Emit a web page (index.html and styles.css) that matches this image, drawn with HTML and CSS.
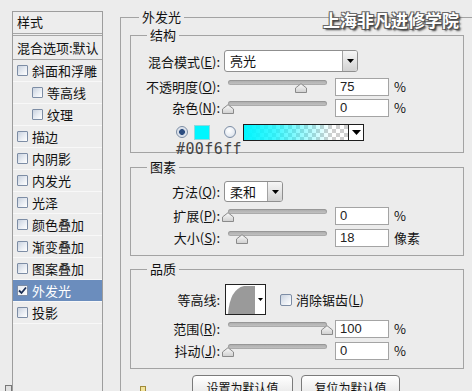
FILE: index.html
```html
<!DOCTYPE html>
<html lang="zh-CN">
<head>
<meta charset="utf-8">
<title>图层样式 - 外发光</title>
<link rel="stylesheet" href="styles.css">
</head>
<body>
<div class="dialog">
  <aside class="styles-panel">
    <div class="panel-head">样式</div>
    <div class="panel-blend">混合选项:默认</div>
    <ul class="style-list">
      <li class="style-item"><span class="cb"></span>斜面和浮雕</li>
      <li class="style-item sub"><span class="cb"></span>等高线</li>
      <li class="style-item sub"><span class="cb"></span>纹理</li>
      <li class="style-item"><span class="cb"></span>描边</li>
      <li class="style-item"><span class="cb"></span>内阴影</li>
      <li class="style-item"><span class="cb"></span>内发光</li>
      <li class="style-item"><span class="cb"></span>光泽</li>
      <li class="style-item"><span class="cb"></span>颜色叠加</li>
      <li class="style-item"><span class="cb"></span>渐变叠加</li>
      <li class="style-item"><span class="cb"></span>图案叠加</li>
      <li class="style-item selected"><span class="cb checked"><svg viewBox="0 0 11 11" width="11" height="11"><path d="M2 5.5 L4.5 8 L9 2.5" fill="none" stroke="#1b2f55" stroke-width="1.8"/></svg></span>外发光</li>
      <li class="style-item"><span class="cb"></span>投影</li>
    </ul>
  </aside>

  <main class="settings">
    <fieldset class="group outer">
      <legend>外发光</legend>
      <div class="outer-body">

        <fieldset class="group inner structure">
          <legend>结构</legend>
          <div class="row r-blend">
            <span class="lbl">混合模式(<u>E</u>):</span>
            <div class="select sel-wide"><span class="sel-text">亮光</span><span class="sel-btn"><svg width="7" height="4" viewBox="0 0 7 4"><path d="M0 0H7L3.5 4Z" fill="#000"/></svg></span></div>
          </div>
          <div class="row r-opacity">
            <span class="lbl">不透明度(<u>O</u>):</span>
            <div class="slider"><span class="track"></span><svg class="thumb" style="left:71px" width="12" height="10" viewBox="0 0 12 10"><defs><linearGradient id="tg1" x1="0" y1="0" x2="0" y2="1"><stop offset="0" stop-color="#fbfbfb"/><stop offset="1" stop-color="#cfcfcf"/></linearGradient></defs><path d="M0.5 9.5V5L6 0.7L11.5 5V9.5Z" fill="url(#tg1)" stroke="#8a8a8a"/></svg></div>
            <span class="num">75</span><span class="unit">%</span>
          </div>
          <div class="row r-noise">
            <span class="lbl">杂色(<u>N</u>):</span>
            <div class="slider"><span class="track"></span><svg class="thumb" style="left:-2px" width="12" height="10" viewBox="0 0 12 10"><path d="M0.5 9.5V5L6 0.7L11.5 5V9.5Z" fill="url(#tg1)" stroke="#8a8a8a"/></svg></div>
            <span class="num">0</span><span class="unit">%</span>
          </div>
          <div class="row r-color">
            <span class="radio on"></span>
            <span class="swatch"></span>
            <span class="radio off"></span>
            <span class="gradient"><span class="grad-fill"></span><span class="grad-btn"><svg width="9" height="5" viewBox="0 0 9 5"><path d="M0 0H9L4.5 5Z" fill="#000"/></svg></span></span>
          </div>
        </fieldset>

        <fieldset class="group inner elements">
          <legend>图素</legend>
          <div class="row r-method">
            <span class="lbl">方法(<u>Q</u>):</span>
            <div class="select sel-short"><span class="sel-text">柔和</span><span class="sel-btn"><svg width="7" height="4" viewBox="0 0 7 4"><path d="M0 0H7L3.5 4Z" fill="#000"/></svg></span></div>
          </div>
          <div class="row r-spread">
            <span class="lbl">扩展(<u>P</u>):</span>
            <div class="slider"><span class="track"></span><svg class="thumb" style="left:-2px" width="12" height="10" viewBox="0 0 12 10"><path d="M0.5 9.5V5L6 0.7L11.5 5V9.5Z" fill="url(#tg1)" stroke="#8a8a8a"/></svg></div>
            <span class="num">0</span><span class="unit">%</span>
          </div>
          <div class="row r-size">
            <span class="lbl">大小(<u>S</u>):</span>
            <div class="slider"><span class="track"></span><svg class="thumb" style="left:12px" width="12" height="10" viewBox="0 0 12 10"><path d="M0.5 9.5V5L6 0.7L11.5 5V9.5Z" fill="url(#tg1)" stroke="#8a8a8a"/></svg></div>
            <span class="num">18</span><span class="unit">像素</span>
          </div>
        </fieldset>

        <fieldset class="group inner quality">
          <legend>品质</legend>
          <div class="row r-contour">
            <span class="lbl">等高线:</span>
            <div class="contour">
              <svg class="contour-curve" width="29" height="29" viewBox="0 0 29 29"><path d="M2 29 Q4 4 18 1 L29 1 L29 29 Z" fill="#9a9a9a"/></svg>
              <span class="contour-btn"><svg width="5" height="3" viewBox="0 0 5 3"><path d="M0 0H5L2.5 3Z" fill="#000"/></svg></span>
            </div>
            <span class="cb aa"></span><span class="aa-text">消除锯齿(<u>L</u>)</span>
          </div>
          <div class="row r-range">
            <span class="lbl">范围(<u>R</u>):</span>
            <div class="slider"><span class="track"></span><svg class="thumb" style="left:97px" width="12" height="10" viewBox="0 0 12 10"><path d="M0.5 9.5V5L6 0.7L11.5 5V9.5Z" fill="url(#tg1)" stroke="#8a8a8a"/></svg></div>
            <span class="num">100</span><span class="unit">%</span>
          </div>
          <div class="row r-jitter">
            <span class="lbl">抖动(<u>J</u>):</span>
            <div class="slider"><span class="track"></span><svg class="thumb" style="left:-2px" width="12" height="10" viewBox="0 0 12 10"><path d="M0.5 9.5V5L6 0.7L11.5 5V9.5Z" fill="url(#tg1)" stroke="#8a8a8a"/></svg></div>
            <span class="num">0</span><span class="unit">%</span>
          </div>
        </fieldset>

        <div class="buttons">
          <span class="mini-icon"></span>
          <button class="btn btn-default" type="button">设置为默认值</button>
          <button class="btn btn-reset" type="button">复位为默认值</button>
        </div>
      </div>
    </fieldset>
  </main>
</div>

<div class="hex-note">#00f6ff</div>
<div class="watermark">上海非凡进修学院</div>
<span class="corner-icon"></span>
</body>
</html>
```

FILE: styles.css
```css
* { box-sizing: border-box; }

html, body {
  margin: 0;
  padding: 0;
}

body {
  width: 472px;
  height: 391px;
  overflow: hidden;
  position: relative;
  background: #ececec;
  font-family: "Noto Sans CJK SC", "Liberation Sans", sans-serif;
  font-size: 13px;
  color: #111;
}

u { text-decoration: underline; text-underline-offset: 1px; }

.dialog {
  display: flex;
  align-items: flex-start;
  height: 391px;
}

/* ---------- left styles panel ---------- */
.styles-panel {
  flex: none;
  width: 91px;
  height: 400px;
  margin: 11px 0 0 12px;
  border: 1px solid #9d9d9d;
  border-bottom: none;
  background: #ededed;
}

.panel-head {
  height: 24px;
  padding-left: 4px;
  line-height: 20px;
  border-bottom: 3px double #a6a6a6;
}

.panel-blend {
  height: 24px;
  padding-left: 4px;
  line-height: 23px;
  border-bottom: 1px solid #a6a6a6;
  white-space: nowrap;
}

.style-list {
  list-style: none;
  margin: 0;
  padding: 0;
}

.style-item {
  height: 22px;
  display: flex;
  align-items: center;
  padding-left: 4px;
  border-bottom: 1px solid #f8f8f8;
  white-space: nowrap;
}

.style-item.sub { padding-left: 19px; }

.style-item.selected {
  background: #6b8dbd;
  color: #fff;
}

.cb {
  flex: none;
  width: 11px;
  height: 11px;
  margin-right: 4px;
  border: 1px solid #7d8da5;
  border-radius: 1px;
  background: linear-gradient(135deg, #c9d2df 0%, #e9edf3 55%, #ffffff 100%);
  position: relative;
}

.cb.checked {
  background: linear-gradient(135deg, #e4e9f0, #ffffff);
}

.cb.checked svg {
  position: absolute;
  left: -1px;
  top: -1px;
}

/* ---------- right settings ---------- */
.settings {
  flex: none;
  margin-left: 17px;
}

.group {
  margin: 0;
  padding: 0;
  min-width: 0;
  border: 1px solid #a3a3a3;
}

.group > legend {
  padding: 0 3px;
  line-height: 14px;
  font-size: 13px;
  color: #111;
}

.outer {
  width: 360px;
  height: 420px;
  margin-top: 10px;
  border-right: none;
  border-bottom: none;
}

.outer > legend { margin-left: 18px; }

.outer-body {
  padding: 4px 0 0 9px;
}

.inner {
  width: 334px;
}

.inner > legend { margin-left: 16px; }

.structure { padding-bottom: 9px; }
.elements { margin-top: 7px; padding-bottom: 7px; }
.quality { margin-top: 6px; padding-bottom: 7px; }

.row {
  display: flex;
  align-items: center;
  height: 21px;
  white-space: nowrap;
}

.lbl {
  flex: none;
  width: 89px;
  text-align: right;
}

.r-blend { height: 22px; margin-top: 8px; }
.r-opacity { margin-top: 4px; }
.r-color { height: 22px; margin-top: 3px; }
.r-method { margin-top: 7px; }
.r-spread { margin-top: 3px; }
.r-size { margin-top: 1px; }
.r-contour { height: 31px; margin-top: 8px; }
.r-range { margin-top: 3px; }
.r-jitter { margin-top: 1px; }

/* select */
.select {
  flex: none;
  display: flex;
  margin-left: 4px;
  height: 22px;
  border: 1px solid #8f8f8f;
  border-radius: 3px;
  background: #fff;
  overflow: hidden;
}

.sel-wide { width: 134px; }
.sel-short { width: 59px; height: 21px; }

.sel-text {
  flex: 1;
  padding-left: 5px;
  line-height: 19px;
}

.sel-btn {
  flex: none;
  width: 15px;
  display: flex;
  align-items: center;
  justify-content: center;
  border-left: 1px solid #a3a3a3;
  background: linear-gradient(#f6f6f6, #d2d2d2);
}

/* slider */
.slider {
  flex: none;
  position: relative;
  width: 107px;
  height: 21px;
  margin-left: 4px;
}

.track {
  position: absolute;
  left: 4px;
  right: 4px;
  top: 4px;
  height: 5px;
  border-radius: 3px;
  background: linear-gradient(#a9a9a9, #c6c6c6);
  box-shadow: inset 0 0 0 1px rgba(0, 0, 0, 0.12);
}

.thumb {
  position: absolute;
  top: 7px;
}

/* numeric input */
.num {
  flex: none;
  width: 54px;
  height: 18px;
  margin-left: 4px;
  padding-left: 4px;
  border: 1px solid #a4a4a4;
  background: #fff;
  font-family: "Liberation Sans", sans-serif;
  font-size: 13px;
  line-height: 16px;
  color: #222;
}

.unit {
  margin-left: 5px;
}

/* color row */
.radio {
  flex: none;
  width: 12px;
  height: 12px;
  border-radius: 50%;
  border: 1px solid #7b8ca4;
}

.radio.on {
  margin-left: 45px;
  background: radial-gradient(circle, #2c4d80 0 2.6px, #d4dbe6 3.2px, #f4f6fa 100%);
}

.radio.off {
  margin-left: 14px;
  background: radial-gradient(circle at 40% 35%, #ffffff 0, #e6ebf2 60%, #c8d0dc 100%);
}

.swatch {
  flex: none;
  width: 16px;
  height: 15px;
  margin-left: 6px;
  background: #00f6ff;
  border: 1px solid #8fd8dc;
}

.gradient {
  flex: none;
  display: flex;
  width: 121px;
  height: 17px;
  margin-left: 7px;
  border: 1px solid #1e1e1e;
}

.grad-fill {
  flex: 1;
  background:
    linear-gradient(to right, #00f6ff 0%, rgba(0, 246, 255, 0.75) 30%, rgba(0, 246, 255, 0) 85%),
    conic-gradient(#cfcfcf 25%, #ffffff 0 50%, #cfcfcf 0 75%, #ffffff 0) 0 0 / 8px 8px;
}

.grad-btn {
  flex: none;
  width: 15px;
  display: flex;
  align-items: center;
  justify-content: center;
  border-left: 1px solid #1e1e1e;
  background: #fff;
}

/* contour */
.contour {
  flex: none;
  display: flex;
  width: 41px;
  height: 31px;
  margin-left: 5px;
  border: 1px solid #222;
  background: #fff;
}

.contour-curve {
  flex: none;
}

.contour-btn {
  flex: 1;
  display: flex;
  align-items: center;
  justify-content: center;
  background: #fff;
}

.cb.aa {
  margin-left: 14px;
  width: 12px;
  height: 12px;
  border-radius: 2px;
}

.aa-text {
  margin-left: 0;
}

/* buttons */
.buttons {
  display: flex;
  align-items: flex-start;
  margin-top: 6px;
}

.mini-icon {
  flex: none;
  width: 6px;
  height: 6px;
  margin: 11px 0 0 10px;
  border: 1px solid #a08a3a;
  background: #f2e39a;
}

.btn {
  flex: none;
  height: 25px;
  padding: 0;
  border: 1px solid #7a7a7a;
  border-radius: 4px;
  background: linear-gradient(#ffffff, #e2e2e2);
  font-family: "Noto Sans CJK SC", sans-serif;
  font-size: 12px;
  line-height: 22px;
  color: #111;
}

.btn-default { width: 101px; margin-left: 46px; }
.btn-reset { width: 99px; margin-left: 8px; }

/* overlays */
.hex-note {
  position: absolute;
  left: 176px;
  top: 141px;
  font-family: "DejaVu Sans Mono", "Liberation Mono", monospace;
  font-size: 15px;
  line-height: 16px;
  letter-spacing: 0.4px;
  color: #444;
}

.watermark {
  position: absolute;
  left: 323px;
  top: 10px;
  font-family: "Noto Sans CJK SC", sans-serif;
  font-weight: 700;
  font-size: 17px;
  line-height: 20px;
  color: #ffffff;
  white-space: nowrap;
  text-shadow:
    1px 1px 0 #4a4a4a,
    -1px -1px 0 #6a6a6a,
    1px -1px 0 #6a6a6a,
    -1px 1px 0 #6a6a6a,
    2px 2px 2px #333;
}

.corner-icon {
  position: absolute;
  left: 5px;
  top: 385px;
  width: 7px;
  height: 7px;
  border: 1px solid #777;
  background: #e0e0e0;
}
```
